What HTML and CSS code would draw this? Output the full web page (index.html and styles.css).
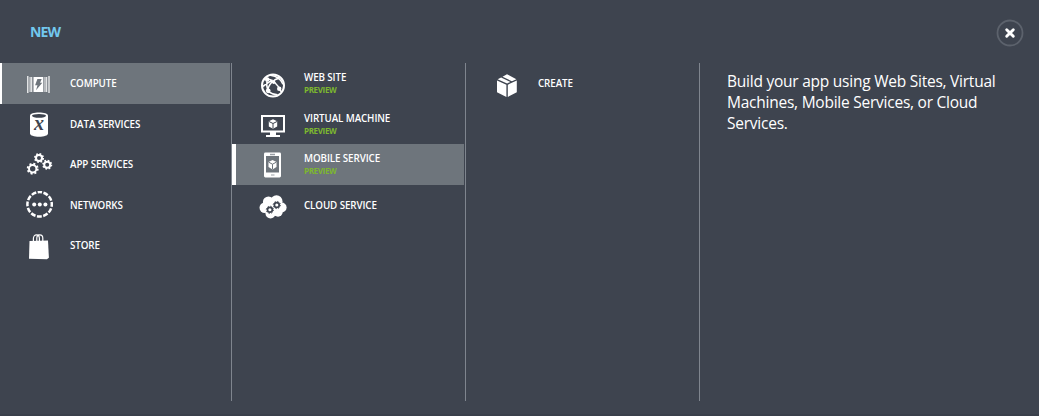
FILE: index.html
```html
<!DOCTYPE html>
<html lang="en">
<head>
<meta charset="utf-8">
<title>New</title>
<link rel="stylesheet" href="styles.css">
</head>
<body>
<div class="drawer">
  <header class="head">
    <h1 class="title">NEW</h1>
    <button class="close" aria-label="Close">
      <svg width="28" height="28" viewBox="0 0 28 28"><circle cx="14" cy="14" r="12.5" fill="none" stroke="#5c626c" stroke-width="1.8"/><path d="M10.7 10.7l6.600 6.600M17.300 10.700l-6.600 6.600" stroke="#fff" stroke-width="2.900" stroke-linecap="round"/></svg>
    </button>
  </header>
  <main class="columns">
    <nav class="column">
      <a class="item selected">
        <svg class="icon" viewBox="0 0 28 28"><path d="M2.200 6h1.200v17H2.200zM4.600 7h1v15h-1zM6.200 7h1v15h-1zM19.500 7h1v15h-1zM21.200 7h1v15h-1zM23.400 6h1.200v17h-1.200z" fill="#fff"/><path d="M8.500 7h9.800v15H8.500z" fill="#fff"/><path d="M12.400 9h4.300l-1.600 3.700h2.200l-6.300 7.600 1.500-5.100h-2.400z" fill="#6e757c"/></svg>
        <span class="label">COMPUTE</span>
      </a>
      <a class="item">
        <svg class="icon low" viewBox="0 0 28 28"><path d="M5 4.700C5 2.700 9 1.600 14 1.600s9 1.100 9 3.100v17.800c0 2-4 3.200-9 3.200s-9-1.200-9-3.200z" fill="#fff"/><ellipse cx="14" cy="4.800" rx="7" ry="1.900" fill="#3e444f"/><text x="14" y="19" class="glyph">x</text></svg>
        <span class="label">DATA SERVICES</span>
      </a>
      <a class="item">
        <svg class="icon" viewBox="0 0 28 28"><g fill="none" stroke="#fff"><g stroke-width="2"><circle cx="14" cy="7" r="3"/><circle cx="22.200" cy="13.700" r="3"/><circle cx="7.700" cy="17.700" r="3.700"/></g><g stroke-width="1.900"><circle cx="14" cy="7" r="4.100" stroke-dasharray="1.600 1.620"/><circle cx="22.200" cy="13.700" r="4.100" stroke-dasharray="1.600 1.620"/><circle cx="7.700" cy="17.700" r="5" stroke-dasharray="2 1.927"/></g></g></svg>
        <span class="label">APP SERVICES</span>
      </a>
      <a class="item">
        <svg class="icon" viewBox="0 0 28 28"><circle cx="14.600" cy="13.300" r="12.200" fill="none" stroke="#fff" stroke-width="2.500" stroke-dasharray="4.900 1.488" stroke-dashoffset="2.450" transform="rotate(-90 14.600 13.300)"/><g fill="#fff"><circle cx="9.200" cy="13.400" r="2"/><circle cx="14.800" cy="13.400" r="2"/><circle cx="20.400" cy="13.400" r="2"/></g></svg>
        <span class="label">NETWORKS</span>
      </a>
      <a class="item">
        <svg class="icon low" viewBox="0 0 28 28"><path d="M4.500 8l18.500-.4.900 17.100-2 1.600L4 25.800z" fill="#fff"/><path d="M8.400 8.300V5.600c0-5 6-5 6 0v2.700M11.800 8.300V5.200c0-4.500 6-4.500 6 0v3.100" fill="none" stroke="#fff" stroke-width="1.200"/></svg>
        <span class="label">STORE</span>
      </a>
    </nav>
    <nav class="column second">
      <a class="item">
        <svg class="icon low" viewBox="0 0 28 28"><g fill="none" stroke="#fff"><circle cx="14" cy="14.600" r="11" stroke-width="2"/><path d="M8 7.800c5 .4 11 5 14 13M20.800 7C15 8 9 13 8.800 20.500M8 7.800c-.5 4-.2 9 1 12.500 3 2 7 3.400 9.600 3.400M11.500 4.300c6 .7 10.500 4 12.500 9M3.800 15.500c3-2 6-5 10-6.200" stroke-width="1.500"/></g><g fill="#fff"><circle cx="8.200" cy="8.400" r="2.200"/><circle cx="9.200" cy="19.800" r="2.400"/><circle cx="20.200" cy="17.800" r="2.200"/><circle cx="14.700" cy="11.300" r="1.700"/></g></svg>
        <span class="text"><span class="label">WEB SITE</span><span class="preview">PREVIEW</span></span>
      </a>
      <a class="item">
        <svg class="icon" viewBox="0 0 28 28"><path d="M3 5h22v15.600H3z" fill="none" stroke="#fff" stroke-width="2"/><path d="M11 21h6v3h4v2H7v-2h4z" fill="#fff"/><path d="M14 8.200l4.200 2v5.200l-4.200 2.400-4.200-2.400v-5.200z" fill="#fff"/><path d="M10 10.500l4 2 4-2M14 12.500v5" fill="none" stroke="#3e444f"/></svg>
        <span class="text"><span class="label">VIRTUAL MACHINE</span><span class="preview">PREVIEW</span></span>
      </a>
      <a class="item selected">
        <svg class="icon" viewBox="0 0 28 28"><path fill-rule="evenodd" d="M6.400 1.500h14.200q1.400 0 1.400 1.400v22.200q0 1.400-1.400 1.400H6.400Q5 26.500 5 25.100V2.900Q5 1.500 6.400 1.500zM7 5v16.500h13V5z" fill="#fff"/><path d="M11 2.700h5v1.500h-5zM12 23.600h3.500v1H12z" fill="#9aa0a6"/><path d="M13.500 9l4 2v5l-4 2.400-4-2.400v-5z" fill="#fff"/><path d="M9.700 11.200l3.800 2 3.800-2M13.500 13.200v5" fill="none" stroke="#6e757c"/></svg>
        <span class="text"><span class="label">MOBILE SERVICE</span><span class="preview">PREVIEW</span></span>
      </a>
      <a class="item">
        <svg class="icon" viewBox="0 0 28 28"><g fill="#fff"><circle cx="5.700" cy="15.800" r="5.200"/><circle cx="9.500" cy="10" r="5.600"/><circle cx="17.500" cy="9.300" r="6"/><circle cx="22.600" cy="15.500" r="5"/><circle cx="19" cy="20" r="4.700"/><circle cx="11.500" cy="21.500" r="5"/><circle cx="14" cy="15" r="7"/></g><g fill="none" stroke="#3e444f"><circle cx="10.900" cy="17.800" r="2.400" stroke-width="1.700"/><circle cx="17.800" cy="13" r="2.400" stroke-width="1.700"/><circle cx="10.900" cy="17.800" r="3.600" stroke-width="1" stroke-dasharray="1.300 1.527"/><circle cx="17.800" cy="13" r="3.600" stroke-width="1" stroke-dasharray="1.300 1.527"/></g></svg>
        <span class="label">CLOUD SERVICE</span>
      </a>
    </nav>
    <nav class="column third">
      <a class="item">
        <svg class="icon low" viewBox="0 0 28 28"><g fill="#fff"><path d="M4 9.400l9.400 4.300v12.200L4 21.200zM14.800 13.700l9-4.300v11.800l-9 4.700zM4.600 8.200l3.500-1.800 9.300 4.500-3.300 1.600zM9.500 5.700L14 3.300l9.400 4.900-4.500 2.100z"/></g></svg>
        <span class="label">CREATE</span>
      </a>
    </nav>
    <section class="about">
      <p>Build your app using Web Sites, Virtual<br>Machines, Mobile Services, or Cloud<br>Services.</p>
    </section>
  </main>
</div>
</body>
</html>
```
FILE: styles.css
```css
* { box-sizing: border-box; }
body {
  margin: 0;
  background: #3e444f;
  color: #fff;
  font-family: "Open Sans", "Noto Sans", sans-serif;
}
.drawer {
  height: 416px;
  border-bottom: 2px solid #3a404b;
}
.head {
  display: flex;
  justify-content: space-between;
  height: 63px;
  padding: 19px 15px 0 30px;
}
.title {
  margin: 1px 0 0;
  color: #72c8ee;
  font-size: 14px;
  line-height: 24px;
  font-weight: 700;
  letter-spacing: -0.9px;
}
.close {
  width: 28px;
  height: 28px;
  padding: 0;
  border: 0;
  background: none;
}
.close svg { display: block; }
.columns {
  display: grid;
  grid-template-columns: 232px 234px 234px 1fr;
  height: 338px;
}
.column {
  border-right: 1px solid #7f858e;
  padding-right: 1px;
}
.item {
  display: flex;
  align-items: center;
  height: 40.5px;
  padding-left: 25px;
  white-space: nowrap;
}
.second .item, .third .item { padding-left: 27px; }
.selected {
  background: #6e757c;
  box-shadow: inset 2px 0 #fff;
}
.second .selected { box-shadow: inset 4px 0 #fff; }
.icon {
  flex: none;
  width: 28px;
  height: 28px;
  margin: 1px 17px 0 0;
}
.icon.low { margin-top: 3px; }
.second .icon { margin-top: 2px; }
.second .icon.low, .third .icon.low { margin-top: 4px; }
.label {
  margin-top: 2px;
  font-size: 9.8px;
  line-height: 12px;
  font-weight: 600;
  letter-spacing: -0.1px;
}
.text {
  display: flex;
  flex-direction: column;
}
.preview {
  color: #7db72f;
  font-size: 8px;
  line-height: 12px;
  font-weight: 700;
  letter-spacing: -0.35px;
}
.glyph {
  fill: #3e444f;
  font: italic bold 20px "Liberation Serif", serif;
  text-anchor: middle;
}
.about { padding: 8px 0 0 27px; }
.about p {
  margin: 0;
  font-size: 15.5px;
  line-height: 21px;
  letter-spacing: -0.24px;
  white-space: nowrap;
}
```
